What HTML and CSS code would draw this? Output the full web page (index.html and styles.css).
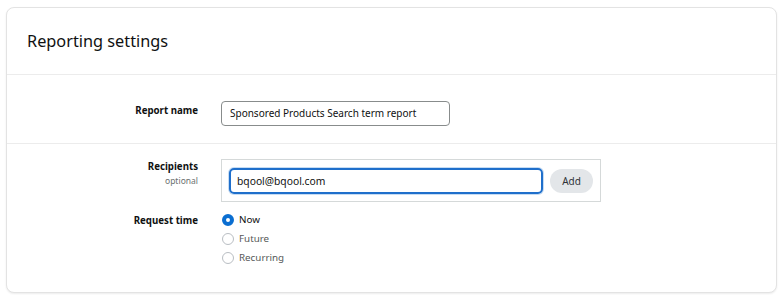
FILE: index.html
```html
<!DOCTYPE html>
<html>
<head>
<meta charset="utf-8">
<link rel="stylesheet" href="styles.css">
</head>
<body>
<div class="card">
  <div class="card-header">
    <h2 class="title">Reporting settings</h2>
  </div>
  <div class="section section-name">
    <div class="label-col">
      <div class="label">Report name</div>
    </div>
    <div class="field-col">
      <div class="text-input">Sponsored Products Search term report</div>
    </div>
  </div>
  <div class="section section-recip">
    <div class="label-col">
      <div class="label">Recipients</div>
      <div class="sublabel">optional</div>
    </div>
    <div class="field-col">
      <div class="recip-box">
        <div class="email-input">bqool@bqool.com</div>
        <button class="add-btn">Add</button>
      </div>
    </div>
    <div class="label-col label-time">
      <div class="label">Request time</div>
    </div>
    <div class="field-col radios">
      <div class="radio-row"><span class="radio checked"></span><span class="radio-label">Now</span></div>
      <div class="radio-row"><span class="radio"></span><span class="radio-label">Future</span></div>
      <div class="radio-row"><span class="radio"></span><span class="radio-label">Recurring</span></div>
    </div>
  </div>
</div>
</body>
</html>
```

FILE: styles.css
```css
* { box-sizing: border-box; }
html, body { margin: 0; padding: 0; background: #ffffff; }
body {
  font-family: "Noto Sans", "Open Sans", sans-serif;
  color: #0f1111;
  padding: 7px 4px 3px 6px;
}
.card {
  width: 771px;
  height: 286px;
  border: 1px solid #e3e3e3;
  border-radius: 8px;
  box-shadow: 0 1px 2px rgba(0,0,0,0.08);
  background: #fff;
}
.card-header {
  height: 67px;
  border-bottom: 1px solid #ececec;
  display: flex;
  align-items: center;
  padding-left: 20px;
}
.title {
  margin: 0;
  font-size: 16.3px;
  font-weight: 400;
  color: #0f1111;
  padding-bottom: 1px;
}
.section {
  display: grid;
  grid-template-columns: 191px 380px;
  column-gap: 23px;
}
.section-name {
  height: 69px;
  border-bottom: 1px solid #ececec;
  padding-top: 26px;
}
.section-recip {
  padding-top: 15px;
  row-gap: 9px;
}
.label-col { text-align: right; }
.label {
  font-size: 9.7px;
  font-weight: 700;
  line-height: 15px;
  color: #0f1111;
}
.section-name .label { margin-top: 2px; }
.sublabel {
  font-size: 8.5px;
  color: #6b7070;
  line-height: 14px;
}
.text-input {
  width: 229px;
  height: 25px;
  border: 1px solid #888c8c;
  border-radius: 4px;
  font-size: 10px;
  line-height: 23px;
  padding-left: 8px;
  color: #0f1111;
}
.recip-box {
  width: 380px;
  height: 43px;
  border: 1px solid #d5d9d9;
  display: flex;
  align-items: center;
  padding-left: 7px;
  gap: 7px;
}
.email-input {
  width: 314px;
  height: 26px;
  border: 2px solid #1f6fcb;
  border-radius: 5px;
  box-shadow: 0 0 0 1px #c6dcf3;
  font-size: 10.3px;
  line-height: 22px;
  padding-left: 6px;
  color: #0f1111;
}
.add-btn {
  width: 43px;
  height: 24px;
  border: none;
  border-radius: 12px;
  background: #e3e6e9;
  font-family: inherit;
  font-size: 10px;
  color: #2f3337;
  padding: 0;
}
.label-time { padding-top: 2px; }
.radios {
  display: flex;
  flex-direction: column;
  gap: 6px;
  padding-top: 2px;
}
.radio-row {
  display: flex;
  align-items: center;
  gap: 5px;
  height: 13px;
  padding-left: 1px;
}
.radio {
  width: 12px;
  height: 12px;
  border-radius: 50%;
  border: 1px solid #b9bec3;
  background: #fff;
}
.radio.checked {
  border: 4px solid #0a6ed1;
}
.radio-label {
  font-size: 9.8px;
  color: #0f1111;
}
.radio-row:not(:first-child) .radio-label { color: #565959; }
```
